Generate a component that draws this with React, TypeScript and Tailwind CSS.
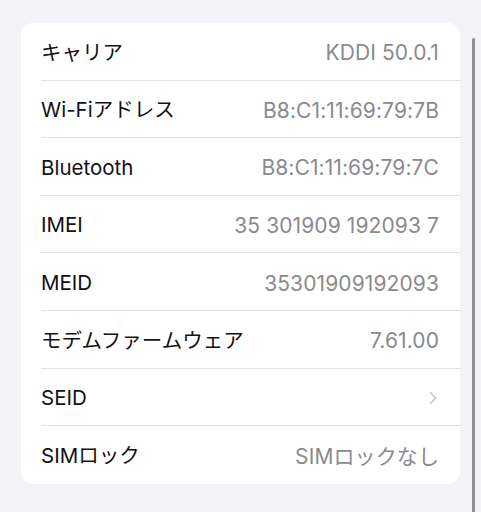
import { FiChevronRight } from 'react-icons/fi';

const rows: { label: string; value?: string; chevron?: boolean }[] = [
  { label: 'キャリア', value: 'KDDI 50.0.1' },
  { label: 'Wi-Fiアドレス', value: 'B8:C1:11:69:79:7B' },
  { label: 'Bluetooth', value: 'B8:C1:11:69:79:7C' },
  { label: 'IMEI', value: '35 301909 192093 7' },
  { label: 'MEID', value: '35301909192093' },
  { label: 'モデムファームウェア', value: '7.61.00' },
  { label: 'SEID', chevron: true },
  { label: 'SIMロック', value: 'SIMロックなし' },
];

export default function App() {
  return (
    <div
      className="relative w-[481px] h-[512px] overflow-hidden bg-[#f2f2f7] pt-[23px] pl-[21px]"
      style={{ fontFamily: 'Inter, "Noto Sans CJK JP", sans-serif' }}
    >
      <div className="w-[439px] bg-white rounded-[12px] overflow-hidden">
        {rows.map((row, i) => (
          <div key={row.label} className="pl-[20px]">
            <div
              className={`flex items-center justify-between h-[57.6px] pr-[21px] pt-[3px] ${
                i < rows.length - 1 ? 'border-b border-[#e2e2e6]' : ''
              }`}
            >
              <span className="text-[20.5px] leading-none text-[#111] tracking-[0px]">{row.label}</span>
              {row.chevron ? (
                <FiChevronRight className="text-[#c4c4c7] w-[22px] h-[22px] -mr-[5px]" strokeWidth={1.6} />
              ) : (
                <span className="text-[21px] leading-none text-[#8a8a8e] tracking-[0.1px]">{row.value}</span>
              )}
            </div>
          </div>
        ))}
      </div>
      <div className="absolute left-[472px] top-[38px] w-[3px] h-[480px] rounded-full bg-[#8e8e93]" />
    </div>
  );
}
